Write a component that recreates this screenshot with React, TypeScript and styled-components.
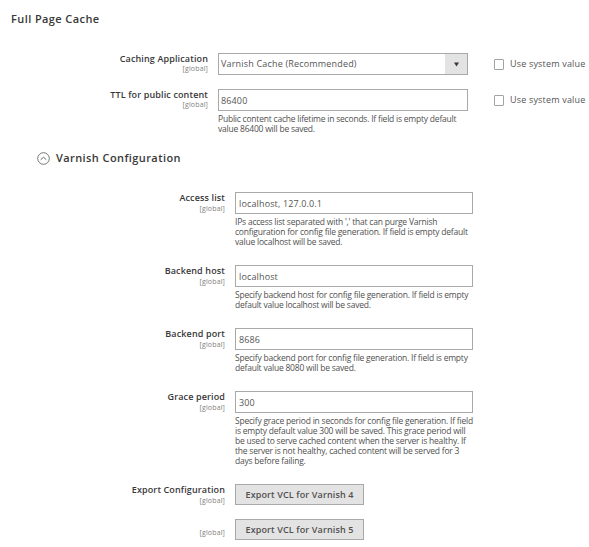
import React from "react";
import styled, { createGlobalStyle } from "styled-components";

const GlobalStyle = createGlobalStyle`
  * { box-sizing: border-box; }
  body {
    margin: 0;
    background: #fff;
    color: #41362f;
    font-family: "Open Sans", "Noto Sans", sans-serif;
  }
`;

const Page = styled.main`
  width: 589px;
  height: 547px;
  overflow: hidden;
  background: #fff;
`;

const Title = styled.h1`
  margin: 0;
  padding: 11px 0 0 11px;
  height: 53px;
  font-size: 11px;
  line-height: 16px;
  font-weight: 600;
  letter-spacing: 0.41px;
  color: #383838;
`;

const SubTitle = styled.h2`
  display: flex;
  align-items: center;
  gap: 6px;
  margin: 0;
  padding: 0 0 11px 37px;
  height: 58px;
  font-size: 11px;
  font-weight: 600;
  letter-spacing: 0.41px;
  color: #383838;

  svg {
    margin-top: 2px;
  }
`;

const Row = styled.div<{ $labelWidth: number; $gap: number; $inner?: boolean }>`
  display: grid;
  grid-template-columns: ${(p) => p.$labelWidth}px ${(p) => (p.$inner ? 238 : 250)}px auto;
  column-gap: 10px;
  align-items: start;
  margin-bottom: ${(p) => p.$gap}px;
`;

const LabelCell = styled.div<{ $top?: number }>`
  padding-top: ${(p) => p.$top ?? 0}px;
  text-align: right;
  white-space: nowrap;
`;

const Label = styled.label`
  display: block;
  font-size: 9px;
  line-height: 11px;
  font-weight: 600;
  letter-spacing: 0.13px;
  color: #383838;
`;

const Scope = styled.span<{ $inner?: boolean }>`
  display: block;
  padding-top: ${(p) => (p.$inner ? 1 : 0)}px;
  font-size: 7px;
  line-height: 10px;
  letter-spacing: 0.14px;
  color: #808080;
`;

const TextBox = styled.input<{ $pad: number }>`
  display: block;
  width: 100%;
  height: 22px;
  border: 1px solid #a9a9a9;
  border-radius: 0;
  padding: 0 ${(p) => p.$pad}px;
  background: #fff;
  font: 400 9px/20px "Open Sans", sans-serif;
  letter-spacing: 0.14px;
  color: #555;
  outline: 0;
`;

const SelectBox = styled.div`
  display: flex;
  justify-content: space-between;
  height: 22px;
  border: 1px solid #a9a9a9;
  padding-left: 2px;
  font-size: 9px;
  line-height: 20px;
  letter-spacing: 0.18px;
  color: #555;
`;

const SelectHandle = styled.span`
  display: flex;
  align-items: center;
  justify-content: center;
  width: 22px;
  background: #e3e3e3;
`;

const Help = styled.p`
  margin: 3px -10px 0 0;
  font-size: 8.5px;
  line-height: 10px;
  letter-spacing: -0.215px;
  color: #505050;
  white-space: pre;
`;

const SystemValue = styled.label`
  display: flex;
  align-items: center;
  height: 21px;
  padding-left: 16px;
  gap: 6px;
  font-size: 9px;
  letter-spacing: 0.18px;
  color: #555;
  white-space: nowrap;
`;

const Check = styled.input`
  appearance: none;
  width: 10px;
  height: 11px;
  margin: 1px 0 0;
  border: 1px solid #a3a3a3;
  border-radius: 1px;
  background: #fff;
`;

const ExportButton = styled.button`
  display: block;
  width: 129px;
  height: 21px;
  padding: 0;
  border: 1px solid #a9a9a9;
  border-radius: 0;
  background: #e3e3e3;
  font: 600 9px/19px "Open Sans", sans-serif;
  letter-spacing: 0.13px;
  color: #505050;
  white-space: nowrap;
`;

const fields = [
  {
    label: "Access list",
    value: "localhost, 127.0.0.1",
    help: "IPs access list separated with ',' that can purge Varnish\nconfiguration for config file generation. If field is empty default\nvalue localhost will be saved.",
  },
  {
    label: "Backend host",
    value: "localhost",
    help: "Specify backend host for config file generation. If field is empty\ndefault value localhost will be saved.",
  },
  {
    label: "Backend port",
    value: "8686",
    help: "Specify backend port for config file generation. If field is empty\ndefault value 8080 will be saved.",
  },
  {
    label: "Grace period",
    value: "300",
    help: "Specify grace period in seconds for config file generation. If field\nis empty default value 300 will be saved. This grace period will\nbe used to serve cached content when the server is healthy. If\nthe server is not healthy, cached content will be served for 3\ndays before failing.",
  },
];

const UseSystemValue = () => (
  <SystemValue>
    <Check type="checkbox" />
    Use system value
  </SystemValue>
);

export default function App() {
  return (
    <Page>
      <GlobalStyle />
      <Title>Full Page Cache</Title>
      <Row $labelWidth={208} $gap={14}>
        <LabelCell>
          <Label>Caching Application</Label>
          <Scope>[global]</Scope>
        </LabelCell>
        <SelectBox>
          Varnish Cache (Recommended)
          <SelectHandle>
            <svg width="5" height="5" viewBox="0 0 5 5">
              <path d="M0 .5h5L2.5 4.5z" fill="#41362f" />
            </svg>
          </SelectHandle>
        </SelectBox>
        <UseSystemValue />
      </Row>
      <Row $labelWidth={208} $gap={0}>
        <LabelCell>
          <Label>TTL for public content</Label>
          <Scope>[global]</Scope>
        </LabelCell>
        <div>
          <TextBox $pad={2} defaultValue="86400" />
          <Help>{"Public content cache lifetime in seconds. If field is empty default\nvalue 86400 will be saved."}</Help>
        </div>
        <UseSystemValue />
      </Row>
      <SubTitle>
        <svg width="13" height="13" viewBox="0 0 13 13" fill="none" stroke="#555">
          <circle cx="6.5" cy="6.5" r="5.8" strokeWidth=".8" />
          <path d="M3.7 7.7 6.5 5.2l2.8 2.5" strokeWidth=".9" />
        </svg>
        Varnish Configuration
      </SubTitle>
      {fields.map((f) => (
        <Row key={f.label} $inner $labelWidth={225} $gap={18}>
          <LabelCell>
            <Label>{f.label}</Label>
            <Scope $inner>[global]</Scope>
          </LabelCell>
          <div>
            <TextBox $pad={3} defaultValue={f.value} />
            <Help>{f.help}</Help>
          </div>
        </Row>
      ))}
      <Row $inner $labelWidth={225} $gap={13}>
        <LabelCell>
          <Label>Export Configuration</Label>
          <Scope $inner>[global]</Scope>
        </LabelCell>
        <ExportButton>Export VCL for Varnish 4</ExportButton>
      </Row>
      <Row $inner $labelWidth={225} $gap={0}>
        <LabelCell $top={8}>
          <Scope $inner>[global]</Scope>
        </LabelCell>
        <ExportButton>Export VCL for Varnish 5</ExportButton>
      </Row>
    </Page>
  );
}
